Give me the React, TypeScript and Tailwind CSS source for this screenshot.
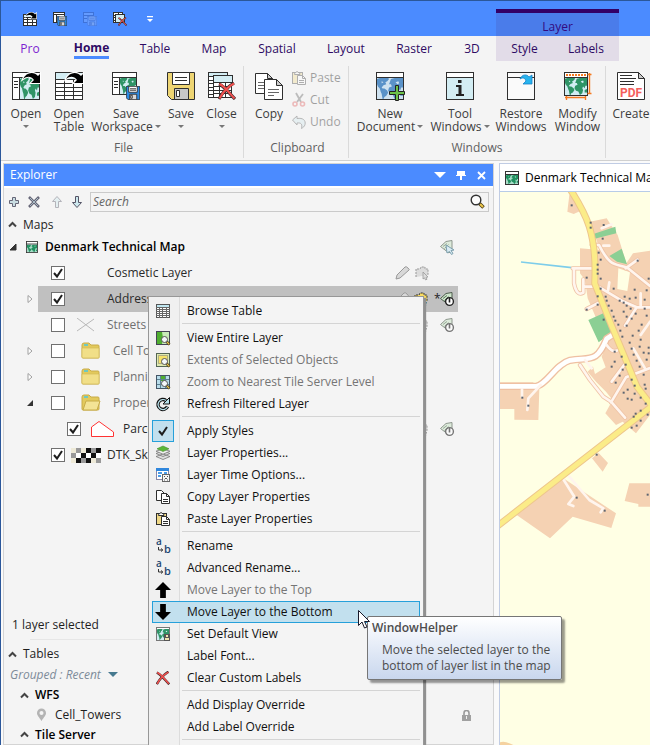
import React from "react";
import type { ReactNode } from "react";

const INK = "#2f2f2f";

/* ---------- icons ---------- */

function Land({ x = 0, y = 0, w = 28, h = 20, fill = "#2f9466", sea = "#d3edf3" }) {
  return (
    <svg x={x} y={y} width={w} height={h} viewBox="0 0 28 20" preserveAspectRatio="none">
      <rect width="28" height="20" fill={sea} />
      <path
        fill={fill}
        d="M0 1l3-1h9l1 1-2 2-2 1 1 2-3 1-2 2 1 1 2 0 3 2 1 2-2 3-2 1-1 2H6l-1-5-1-2-1-3-2-2-1-2zM15 1l4-1h9v9l-2 0-1 3-2-2-1 2 1 2-1 4-3 2-2-4-3-1-2-3 1-3 3-1-1-2-2 0zM25 14l3-1v4l-3 0z"
      />
      <path fill={sea} d="M20 4l3-1 1 2-2 1zM5 3l2 1-2 1z" />
    </svg>
  );
}

function Swoop({ x = 0, y = 0, s = 1 }) {
  return (
    <g transform={`translate(${x} ${y}) scale(${s})`}>
      <path d="M0 7C3 0 11-1 15 4l2-2v9H8l3-3C8 4 4 4 0 7z" fill="#fff" stroke="#fff" strokeWidth="2" />
      <path d="M0 7C3 0 11-1 15 4l2-2v9H8l3-3C8 4 4 4 0 7z" fill="#000" />
    </g>
  );
}

function Floppy({ x = 0, y = 0, w = 14, body = "#2b8ce6", shutter = "#d8d8d8", accent = "#2f2f2f" }) {
  const line = w > 20 ? 1 : 1.8;
  return (
    <svg x={x} y={y} width={w} height={w} viewBox="0 0 28 28">
      <path d="M.5.5h27v27H4.500l-4-4z" fill={body} stroke={accent} strokeWidth={line} />
      <path d="M5.500.5h17v12h-17z" fill="#fff" stroke={accent} strokeWidth={line} />
      <path d="M8 5.500h12M8 8.500h12" stroke={accent} strokeWidth={line} />
      <path d="M7.500 16.500h14v11h-14z" fill={shutter} stroke={accent} strokeWidth={line} />
      <path d="M9.500 18.500h3v6h-3z" fill="#fff" stroke={accent} strokeWidth={line} />
    </svg>
  );
}

function RedX({ x = 0, y = 0, w = 18 }) {
  return (
    <svg x={x} y={y} width={w} height={w} viewBox="0 0 18 18">
      <path d="M1 2c5 2 10 9 16 15M16 1C11 4 5 10 1 17" stroke="#3a2a2a" strokeWidth="3.200" fill="none" />
      <path d="M1.500 2c5 2 10 9 15 14.500M16 1.500C11 4 5 10 1.500 16.500" stroke="#f0504f" strokeWidth="2" fill="none" />
    </svg>
  );
}

function Grid({ x, y, w, h, cols, rows }: { x: number; y: number; w: number; h: number; cols: number; rows: number }) {
  let d = "";
  for (let i = 1; i < cols; i++) d += `M${x + Math.round((w * i) / cols)} ${y}v${h}`;
  for (let j = 1; j < rows; j++) d += `M${x} ${y + Math.round((h * j) / rows)}h${w}`;
  return (
    <>
      <rect x={x} y={y} width={w} height={h} fill="#fff" stroke={INK} />
      <path d={d} stroke={INK} fill="none" />
    </>
  );
}

function Big({ children }: { children: ReactNode }) {
  return (
    <svg width="30" height="30" viewBox="0 0 30 30" className="shrink-0" aria-hidden="true">
      {children}
    </svg>
  );
}
function Small({ children, size = 14 }: { children: ReactNode; size?: number }) {
  return (
    <svg width={size} height={size} viewBox="0 0 14 14" className="shrink-0 overflow-visible" aria-hidden="true">
      {children}
    </svg>
  );
}

const OpenIcon = () => (
  <Big>
    <rect x="1.500" y="1.500" width="27" height="27" fill="#fff" stroke={INK} />
    <Land x={9} y={7} w={19} h={21} />
    <path d="M1 6.500h28M8.500 6.500v22M3 10.500h4M3 13.500h4M3 16.500h4" stroke={INK} />
    <Swoop x={12} y={1} />
  </Big>
);
const OpenTableIcon = () => (
  <Big>
    <rect x="1.500" y="1.500" width="27" height="27" fill="#d3edf3" stroke={INK} />
    <Grid x={1.5} y={8.5} w={27} h={20} cols={3} rows={5} />
    <Swoop x={12} y={1} />
  </Big>
);
const SaveWorkspaceIcon = () => (
  <Big>
    <rect x="1.500" y="1.500" width="24" height="22" fill="#fff" stroke={INK} />
    <Land x={9} y={7} w={16} h={16} />
    <path d="M1 6.500h25M8.500 6.500v17M3 10.500h4M3 13.500h4M3 16.500h4" stroke={INK} />
    <Floppy x={15} y={15} w={14} />
  </Big>
);
const SaveIcon = () => (
  <Big>
    <Floppy x={1} y={1} w={28} body="#eed573" shutter="#c8c8c8" />
  </Big>
);
const CloseIcon = () => (
  <Big>
    <Grid x={1.5} y={5.5} w={15} h={21} cols={2} rows={6} />
    <rect x="1.500" y="1.500" width="19" height="4" fill="#d3edf3" stroke={INK} />
    <Grid x={6.5} y={11.5} w={18} h={15} cols={3} rows={4} />
    <rect x="6.500" y="4.500" width="19" height="7" fill="#d3edf3" stroke={INK} />
    <RedX x={11} y={11} w={18} />
  </Big>
);
const CopyIcon = () => (
  <Big>
    <path d="M1.500 2.500h12l5 5v15h-17z" fill="#fff" stroke={INK} />
    <path d="M13.500 2.500v5h5z" fill="#ccc" stroke={INK} />
    <path d="M4 11.500h6M4 14.500h6M4 17.500h6" stroke="#666" />
    <path d="M10.500 8.500h12l6 6v14h-18z" fill="#fff" stroke={INK} />
    <path d="M22.500 8.500v6h6z" fill="#ccc" stroke={INK} />
    <path d="M14 18.500h11M14 21.500h11M14 24.500h6" stroke="#666" />
  </Big>
);
const NewDocIcon = () => (
  <Big>
    <rect x="1.500" y="1.500" width="27" height="27" fill="#fff" stroke={INK} />
    <Land x={2} y={7} w={26} h={21} fill="#5a92c8" sea="#cfe2f0" />
    <path d="M1 6.500h28" stroke={INK} />
    <path d="M20.500 14.500h3v6h6v3h-6v6h-3v-6h-6v-3h6z" fill="#6cc24a" stroke="#222" />
  </Big>
);
const ToolWinIcon = () => (
  <Big>
    <rect x="1.500" y="1.500" width="27" height="27" fill="#d3edf3" stroke={INK} />
    <path d="M2 2h26v5H2z" fill="#fff" />
    <path d="M1 6.500h28" stroke={INK} />
    <path d="M11 14h5.500v9H19v2h-8v-2h2.500v-7H11zM13 9h3.500v3H13z" fill="#222" />
  </Big>
);
const RestoreIcon = () => (
  <Big>
    <rect x="1.500" y="1.500" width="27" height="27" fill="#fafafa" stroke={INK} />
    <path d="M1 6.500h28" stroke={INK} />
    <path d="M14 8c2-5 7-5 9-2l3-2v9h-9l3-3c-1-3-3-4-6-2z" fill="#27b4ee" stroke="#1580c8" strokeWidth="0.800" />
  </Big>
);
const ModifyIcon = () => (
  <Big>
    <rect x="1.500" y="1.500" width="23" height="23" fill="#fff" stroke={INK} />
    <Land x={2} y={7} w={22} h={17} />
    <path d="M1 6.500h24" stroke={INK} />
    <path d="M3 4h20" stroke="#f57a20" strokeWidth="2" strokeDasharray="2 1" />
    <path d="M26.500 2v21M2 26.500h21M24.500 3.500h4M24.500 22.500h4M3.500 25v4M22.500 25v4" stroke="#f57a20" fill="none" strokeWidth="1.400" />
  </Big>
);
const PdfIcon = () => (
  <Big>
    <path d="M1.500 1.500h21l6 6v21h-27z" fill="#fff" stroke={INK} />
    <path d="M22.500 1.500v6h6z" fill="#ccc" stroke={INK} />
    <path d="M4 4.500h12M4 7.500h16M4 10.500h14M4 13.500h14" stroke={INK} />
    <text x="15" y="26" textAnchor="middle" fontFamily="Roboto, sans-serif" fontWeight="700" fontSize="12" fill="#f4605c">PDF</text>
  </Big>
);

const MapMini = ({ size = 12 }) => (
  <Small size={size}>
    <rect x="0.500" y="0.500" width="13" height="13" fill="#fff" stroke="#333" />
    <Land x={1} y={4} w={12} h={9} fill="#219060" sea="#a8dcc8" />
    <path d="M0 3.500h14" stroke="#333" />
  </Small>
);
const Magnify = ({ x = 5, y = 5 }) => (
  <g transform={`translate(${x} ${y})`}>
    <path d="M5.500 5.500L8.500 8.500" stroke="#4a4020" strokeWidth="2.600" />
    <path d="M6 6l2.300 2.300" stroke="#f0c850" strokeWidth="1.200" />
    <circle cx="3.500" cy="3.500" r="3" fill="#f4f8fa" stroke="#555" />
  </g>
);
const TableIcon = () => (
  <Small>
    <rect x="0.500" y="0.500" width="13" height="13" fill="#fff" stroke="#555" />
    <path d="M1 1h12v2H1z" fill="#bfe6f0" />
    <path d="M0 3.500h14M0 5.500h14M0 7.500h14M0 9.500h14M0 11.500h14M3.500 3v11M6.500 3v11M10.500 3v11" stroke="#666" />
  </Small>
);
const ViewLayerIcon = () => (
  <Small>
    <rect x="0.500" y="0.500" width="13" height="13" fill="#c8ecb8" stroke="#445" />
    <path d="M1 1h5l1 6-1 6H1z" fill="#4fae30" />
    <Magnify />
  </Small>
);
const ExtentsIcon = () => (
  <Small>
    <rect x="0.500" y="0.500" width="13" height="13" fill="#dfe9b0" stroke="#565" />
    <rect x="2.500" y="2.500" width="9" height="8" fill="#f6e268" stroke="#777" strokeDasharray="1 1" />
    <Magnify />
  </Small>
);
const TileIcon = () => (
  <Small>
    <rect x="0.500" y="0.500" width="13" height="13" fill="#b8dcea" stroke="#456" />
    <path d="M5 1h5v5H5z" fill="#4fae30" />
    <path d="M4.500 1v12M9.500 1v12M1 4.500h12M1 9.500h12" stroke="#5b8192" />
    <Magnify />
  </Small>
);
const RefreshIcon = () => (
  <Small>
    <path d="M11.500 9.500A5 5 0 1 1 10 3.500" fill="none" stroke="#111" strokeWidth="3.400" />
    <path d="M13.500.5v6.500H7z" fill="#b9e2ec" stroke="#111" />
    <path d="M11.500 9.800A5 5 0 1 1 10 3.500" fill="none" stroke="#b9e2ec" strokeWidth="1.200" />
  </Small>
);
const CheckGlyph = () => (
  <Small>
    <path d="M3 7l3 3.500L11 3" fill="none" stroke="#1e1e1e" strokeWidth="2" />
  </Small>
);
const LayersIcon = () => (
  <Small>
    <path d="M0 10.500l7-2.500 7 2.500-7 3zM0 7.500L7 5l7 2.500-7 3z" fill="#ddd" stroke="#777" strokeWidth="0.800" />
    <path d="M0 5.200L7 3l7 2.200-7 3z" fill="#eee" stroke="#777" strokeWidth="0.800" />
    <path d="M1 2.800L7 0l6 2.800-6 2.700z" fill="#5cb838" stroke="#498a30" strokeWidth="0.600" />
  </Small>
);
const TimeIcon = () => (
  <Small>
    <rect x="0.500" y="0.500" width="12" height="11" fill="#fff" stroke="#88a" />
    <path d="M0 0h13v3H0z" fill="#2f86dc" />
    <path d="M2 5h4M2 8h3M8 5h3" stroke="#4b9be6" strokeWidth="2" />
    <rect x="6.500" y="6.500" width="7" height="7" fill="#f6f6f6" stroke="#666" />
    <path d="M8 8.500h1M11 8.500h1M9 10.500h2M8 12h1M11 12h1" stroke="#555" />
  </Small>
);
const CopySmall = () => (
  <Small>
    <path d="M0.500 0.500h5l3 3v7h-8z" fill="#fff" stroke={INK} />
    <path d="M5.500 3.500h5l3 3v7h-8z" fill="#fff" stroke={INK} />
    <path d="M10.500 3.500v3h3M7 9.500h5M7 11.500h5" stroke={INK} fill="none" />
  </Small>
);
const PasteSmall = () => (
  <Small>
    <rect x="0.500" y="1.500" width="10" height="11" fill="#efd886" stroke={INK} />
    <path d="M2.500 2.500L5 0.500l3 2v1h-5.500z" fill="#fff" stroke={INK} />
    <path d="M5.500 4.500h5l3 3v6h-8z" fill="#fff" stroke={INK} />
    <path d="M10.500 4.500v3h3M7 9.500h5M7 11.500h5" stroke={INK} fill="none" />
  </Small>
);
const RenameIcon = () => (
  <Small>
    <text x="0" y="6" fontFamily="'Open Sans', sans-serif" fontWeight="600" fontSize="10" fill="#1d4672">a</text>
    <text x="8" y="14" fontFamily="'Open Sans', sans-serif" fontWeight="600" fontSize="11" fill="#1d4672">b</text>
    <path d="M2.500 8v3h4M5 9.500L6.800 11 5 12.500" fill="none" stroke="#333" />
  </Small>
);
const UpIcon = () => (
  <Small size={16}>
    <path d="M7 0l7 7H9.500v7h-5V7H0z" fill="#000" />
  </Small>
);
const DownIcon = () => (
  <Small size={16}>
    <path d="M7 14l7-7H9.500V0h-5v7H0z" fill="#000" />
  </Small>
);
const DefaultViewIcon = () => (
  <Small>
    <rect x="0.500" y="0.500" width="13" height="13" fill="#fff" stroke="#777" />
    <Land x={1} y={2} w={12} h={11} />
    <path d="M8 7h6v7H8z" fill="#555" />
    <path d="M10 8h2v2h-2zM9 11h4v2H9z" fill="#f0e6b0" />
  </Small>
);
const ClearIcon = () => (
  <Small>
    <RedX w={14} />
  </Small>
);
const ScissorsIcon = () => (
  <Small>
    <path d="M4 0l5 9M11 1L5 9" stroke="#555" strokeWidth="1.800" />
    <circle cx="3" cy="11" r="2" fill="none" stroke="#e05050" strokeWidth="1.600" />
    <circle cx="10.500" cy="11" r="2" fill="none" stroke="#e05050" strokeWidth="1.600" />
  </Small>
);
const UndoIcon = () => (
  <Small>
    <path d="M0.500 5L5 1v2.500c6-1 9 2 8 6-.5 2-2 3-3.500 4 1-4 0-6-4.500-5.500v2z" fill="#cfe6ee" stroke="#444" />
  </Small>
);
const Folder = ({ open = false }) => (
  <svg width="20" height="18" viewBox="0 0 20 18" className="shrink-0" aria-hidden="true">
    <path d="M1 3q0-2 2-2h5l2 2h7q1 0 1 1v11q0 1-1 1H2q-1 0-1-1z" fill="#e2c95c" stroke="#c8ac48" />
    <path d="M3 2h4v2H3z" fill="#6fc8c0" />
    {open ? (
      <path d="M5 7h14l-3 9H2z" fill="#f3e395" stroke="#c8ac48" />
    ) : (
      <path d="M1 6h17v10H2q-1 0-1-1z" fill="#f1df88" stroke="#d3ba58" strokeWidth="0.700" />
    )}
  </svg>
);
const Pencil = () => (
  <Small>
    <path d="M1 13l1-4 8-8q1-1 3 1t1 2l-9 8z" fill="#d8d8d8" stroke="#999" />
  </Small>
);
const SelectIcon = ({ active = false }) => (
  <Small>
    <path d="M1 11V3h4l1-2h4v2h3v6" fill={active ? "#f7da62" : "#dcdcdc"} stroke={active ? "#333" : "#999"} strokeDasharray="2 1" />
    <path d="M8 6l5 5-2 .3 1 2-1.500.6-1-2L8 13z" fill={active ? "#bfe2ee" : "#ddd"} stroke={active ? "#478" : "#999"} strokeWidth="0.800" />
  </Small>
);
const TagIcon = ({ kind = "power", strong = false }) => (
  <Small>
    <g opacity={strong ? 1 : 0.6}>
      <path d="M0.500 6.500L6 1.500l6-1V10l-3 3z" fill="#cfe6cc" stroke="#4b5b4b" />
      <path d="M3 6.500l4-3M4.500 8.500l4-4" stroke="#5d7a5d" />
      {kind === "power" ? (
        <>
          <circle cx="9.500" cy="9.500" r="3.900" fill="#fff" stroke="#222" strokeWidth="1.400" />
          <path d="M9.500 5.500v5" stroke="#222" strokeWidth="1.600" />
        </>
      ) : (
        <path d="M6 5l8 5-3 .5 2 3-1.500 1-2-3L7 13z" fill="#cce8f4" stroke="#2d6880" />
      )}
    </g>
  </Small>
);

/* ---------- ribbon ---------- */

const caret = <span className="inline-block border-x-[3px] border-t-[3px] border-x-transparent border-t-[#777]" />;

function BigButton({ icon, lines, drop, className }: { icon: ReactNode; lines: string[]; drop?: boolean; className: string }) {
  const single = lines.length === 1;
  return (
    <button className={`flex shrink-0 flex-col items-center text-[12px] leading-[13px] text-[#3c3c3c] ${className}`}>
      {icon}
      <span className="mt-[6px] whitespace-nowrap">{lines[0]}</span>
      {!single && (
        <span className="flex items-center gap-[2px] whitespace-nowrap">
          {lines[1]}
          {drop && caret}
        </span>
      )}
      {single && drop && <span className="flex h-[13px] items-center">{caret}</span>}
    </button>
  );
}

function Group({ label, children, className = "" }: { label: string; children: ReactNode; className?: string }) {
  return (
    <section className={`flex h-[92px] shrink-0 flex-col border-r border-[#dadada] ${className}`}>
      <div className="flex flex-1 pt-[5px]">{children}</div>
      <div className="pb-[2px] text-center text-[12px] leading-[16px] text-[#606060]">{label}</div>
    </section>
  );
}

const tabs: [string, string][] = [
  ["Table", "w-[62px]"],
  ["Map", "w-[56px]"],
  ["Spatial", "w-[70px]"],
  ["Layout", "w-[68px]"],
  ["Raster", "w-[68px]"],
  ["3D", "w-[48px]"],
];

function TitleAndTabs() {
  return (
    <header className="relative shrink-0">
      <div className="flex h-[36px] items-center gap-[16px] border-t border-[#2b579a] bg-[#4b8bff] pl-[22px]">
        <button aria-label="Open table">
          <Small>
            <Grid x={0.5} y={4.5} w={13} h={9} cols={3} rows={3} />
            <rect x="0.500" y="2.500" width="13" height="3" fill="#d3edf3" stroke={INK} />
            <Swoop x={3} y={0} s={0.6} />
          </Small>
        </button>
        <button aria-label="Save tables">
          <Small>
            <rect x="0.500" y="0.500" width="11" height="10" fill="#fff" stroke={INK} />
            <path d="M0 2.500h12M3.500 2v9" stroke={INK} />
            <Floppy x={4} y={4} w={10} />
          </Small>
        </button>
        <button aria-label="Save table as" disabled className="opacity-30">
          <Small>
            <rect x="0.500" y="0.500" width="10" height="10" fill="#9fc0ff" stroke="#223a80" />
            <path d="M0 3.500h11M0 6.500h11M5.500 3v8" stroke="#223a80" />
            <Floppy x={4} y={4} w={10} body="#9fc0ff" accent="#223a80" />
          </Small>
        </button>
        <button aria-label="Close all">
          <Small>
            <Grid x={0.5} y={0.5} w={9} h={10} cols={2} rows={4} />
            <rect x="2.500" y="2.500" width="9" height="8" fill="#d3edf3" stroke={INK} />
            <RedX x={5} y={5} w={9} />
          </Small>
        </button>
        <button aria-label="Customize quick access">
          <Small>
            <path d="M4 4h6v1.200H4zM4 7h6l-3 3z" fill="#fff" />
          </Small>
        </button>
      </div>
      <nav className="flex h-[26px] items-stretch bg-[#f4f4f4] text-[12px] leading-[24px] text-[#2e0a63]">
        <button className="w-[58px] shrink-0 text-[#7c1fd0]">Pro</button>
        <button className="flex w-[65px] shrink-0 justify-center font-bold">
          <span className="h-[23px] border-b-[3px] border-[#4b8bff]">Home</span>
        </button>
        {tabs.map(([t, w]) => (
          <button key={t} className={`shrink-0 ${w}`}>
            {t}
          </button>
        ))}
        <div className="mb-px flex shrink-0 bg-[#e2dce8]">
          <button className="w-[57px]">Style</button>
          <button className="w-[66px]">Labels</button>
        </div>
      </nav>
      <div className="absolute top-[9px] left-[495px] h-[27px] w-[123px] border-t-4 border-[#330066] bg-[#4a7cea] text-center text-[12px] leading-[27px] text-[#330a80]">
        Layer
      </div>
    </header>
  );
}

function Ribbon() {
  const small = "flex h-[22px] items-center gap-[4px] text-[12px]";
  return (
    <div className="flex h-[98px] shrink-0 items-start overflow-hidden bg-[#f4f4f4] pt-[4px] pl-[3px]">
      <Group label="File">
        <BigButton className="w-[44px]" icon={<OpenIcon />} lines={["Open"]} drop />
        <BigButton className="w-[42px]" icon={<OpenTableIcon />} lines={["Open", "Table"]} />
        <BigButton className="w-[72px]" icon={<SaveWorkspaceIcon />} lines={["Save", "Workspace"]} drop />
        <BigButton className="w-[38px]" icon={<SaveIcon />} lines={["Save"]} drop />
        <BigButton className="w-[43px]" icon={<CloseIcon />} lines={["Close"]} drop />
      </Group>
      <Group label="Clipboard" className="w-[105px] pl-[3px]">
        <BigButton className="w-[44px]" icon={<CopyIcon />} lines={["Copy"]} />
        <div className="-mt-[4px] ml-px flex flex-col opacity-35">
          <button disabled className={small}><PasteSmall />Paste</button>
          <button disabled className={small}><ScissorsIcon />Cut</button>
          <button disabled className={small}><UndoIcon />Undo</button>
        </div>
      </Group>
      <Group label="Windows">
        <BigButton className="w-[82px]" icon={<NewDocIcon />} lines={["New", "Document"]} drop />
        <BigButton className="w-[58px]" icon={<ToolWinIcon />} lines={["Tool", "Windows"]} drop />
        <BigButton className="ml-[3px] w-[58px]" icon={<RestoreIcon />} lines={["Restore", "Windows"]} />
        <BigButton className="w-[55px]" icon={<ModifyIcon />} lines={["Modify", "Window"]} />
      </Group>
      <div className="flex pt-[5px]">
        <BigButton className="w-[50px]" icon={<PdfIcon />} lines={["Create"]} />
      </div>
    </div>
  );
}

/* ---------- explorer ---------- */

function Tick({ label, checked }: { label: string; checked?: boolean }) {
  return (
    <span className="grid shrink-0 place-items-center">
      <input
        type="checkbox"
        aria-label={label}
        defaultChecked={checked}
        className="peer size-[14px] appearance-none border border-[#707070] bg-white [grid-area:1/1]"
      />
      <span className="pointer-events-none invisible [grid-area:1/1] peer-checked:visible">
        <CheckGlyph />
      </span>
    </span>
  );
}

function Row(p: {
  label: string;
  checked?: boolean;
  expander?: "closed" | "open";
  icon?: ReactNode;
  iconWidth?: string;
  nested?: boolean;
  dim?: boolean;
  selected?: boolean;
  trail?: ReactNode;
}) {
  return (
    <li className="flex h-[26px] items-center">
      <span className="flex w-[34px] shrink-0 justify-end pr-[4px]">
        {p.expander && (
          <button aria-label={`Toggle ${p.label}`} className="flex">
            <svg width="8" height="10" viewBox="0 0 8 10" aria-hidden="true">
              {p.expander === "open" ? (
                <path d="M7 2v6H1z" fill="#333" />
              ) : (
                <path d="M2 1.500v7L6 5z" fill="#fff" stroke="#a0a0a0" />
              )}
            </svg>
          </button>
        )}
      </span>
      <span className={`mr-[35px] flex h-full flex-1 items-center pr-[4px] ${p.nested ? "pl-[29px]" : "pl-[13px]"} ${p.selected ? "bg-[#c0c0c0]" : ""}`}>
        <Tick label={p.label} checked={p.checked} />
        <span className={`flex shrink-0 items-center justify-center ${p.iconWidth ?? "w-[42px]"}`}>{p.icon}</span>
        <span className={`whitespace-nowrap ${p.dim ? "text-[#707070]" : "text-[#2a2a2a]"}`}>{p.label}</span>
        <span className="ml-auto flex items-center gap-[6px]">{p.trail}</span>
      </span>
    </li>
  );
}

const Chevron = () => (
  <svg width="9" height="7" viewBox="0 0 9 7" className="shrink-0" aria-hidden="true">
    <path d="M1 5.500L4.500 2 8 5.500" fill="none" stroke="#444" strokeWidth="2" />
  </svg>
);

function Explorer() {
  const toolBtn = "flex size-[14px] shrink-0";
  const layerTools = (
    <>
      <Pencil />
      <SelectIcon />
      <span className="w-0" />
      <TagIcon />
    </>
  );
  return (
    <aside className="flex w-[491px] shrink-0 flex-col border border-[#d4d4d4] bg-[#f4f4f4] text-[12px] text-[#1e1e1e]">
      <div className="flex h-[22px] shrink-0 items-center bg-[#4b8bff] pr-[7px] pl-[6px] text-white">
        <h2>Explorer</h2>
        <div className="ml-auto flex items-center gap-[9px]">
          <button aria-label="Options" className="border-x-[6px] border-t-[6px] border-x-transparent border-t-white" />
          <button aria-label="Pin">
            <svg width="11" height="11" viewBox="0 0 11 11"><path d="M2 1h8v4h1v1H1V5h1zM5 6h2v4H5z" fill="#fff" /></svg>
          </button>
          <button aria-label="Close panel" className="ml-[2px]">
            <svg width="9" height="9" viewBox="0 0 9 9"><path d="M1 1l7 7M8 1L1 8" stroke="#fff" strokeWidth="1.800" /></svg>
          </button>
        </div>
      </div>
      <div className="flex h-[29px] shrink-0 items-center border-t-2 border-white pr-[4px] pl-[3px]">
        <button aria-label="Add" className={toolBtn}>
          <Small><path d="M5.500 2.500h3v3h3v3h-3v3h-3v-3h-3v-3h3z" fill="#c9dde2" stroke="#667" /></Small>
        </button>
        <button aria-label="Remove" className={`${toolBtn} ml-[6px]`}>
          <Small><path d="M2 2l10 10M12 2L2 12" stroke="#667" strokeWidth="2.600" /><path d="M3 3l8 8M11 3l-8 8" stroke="#b9d0d8" strokeWidth="0.800" /></Small>
        </button>
        <button aria-label="Move up" disabled className={`${toolBtn} ml-[9px] opacity-40`}>
          <Small><path d="M7 1.500l4.500 5h-3v6h-3v-6h-3z" fill="#cde8ee" stroke="#556" /></Small>
        </button>
        <button aria-label="Move down" className={`${toolBtn} ml-[6px]`}>
          <Small><path d="M7 12.500l4.500-5h-3v-6h-3v6h-3z" fill="#cde8ee" stroke="#556" /></Small>
        </button>
        <label className="ml-[6px] flex h-[20px] min-w-0 flex-1 items-center border border-[#cacaca] pr-[3px]">
          <input type="text" aria-label="Search" placeholder="Search" className="min-w-0 flex-1 bg-transparent pl-[2px] italic outline-none placeholder:text-[#666]" />
          <svg width="15" height="15" viewBox="0 0 15 15" aria-hidden="true">
            <path d="M9.500 9.500l4 4" stroke="#4a3c14" strokeWidth="3.600" />
            <path d="M10 10l3 3" stroke="#efc84a" strokeWidth="2" />
            <circle cx="6" cy="6" r="4.800" fill="#fdfdfd" stroke="#333" strokeWidth="1.400" />
          </svg>
        </label>
      </div>
      <div className="flex h-[19px] shrink-0 items-center gap-[6px] pl-[4px]">
        <Chevron />
        Maps
      </div>
      <div className="flex h-[26px] shrink-0 items-center pl-[5px]">
        <svg width="8" height="8" viewBox="0 0 8 8" aria-hidden="true"><path d="M7 1v6H1z" fill="#333" stroke="#333" /></svg>
        <span className="ml-[9px] flex"><MapMini /></span>
        <span className="ml-[7px] font-semibold text-black">Denmark Technical Map</span>
        <span className="mr-[39px] ml-auto"><TagIcon kind="arrow" /></span>
      </div>
      <ul className="min-h-0 flex-1 overflow-hidden">
        <Row label="Cosmetic Layer" checked trail={<><Pencil /><SelectIcon /><span className="w-[19px]" /></>} />
        <Row
          label="Addresses"
          checked
          selected
          expander="closed"
          trail={<><Pencil /><SelectIcon active /><span className="w-[5px]">*</span><span className="-ml-[5px] flex"><TagIcon strong /></span></>}
        />
        <Row
          label="Streets"
          dim
          icon={<svg width="20" height="14" viewBox="0 0 20 14" aria-hidden="true"><path d="M1 0l17 13M18 1L1 13" stroke="#b8b8b8" fill="none" /></svg>}
          trail={layerTools}
        />
        <Row label="Cell Towers" dim expander="closed" icon={<Folder />} iconWidth="w-[48px] pl-[4px]" />
        <Row label="Planning" dim expander="closed" icon={<Folder />} iconWidth="w-[48px] pl-[4px]" />
        <Row label="Property" dim expander="open" icon={<Folder open />} iconWidth="w-[48px] pl-[4px]" />
        <Row
          label="Parcels"
          checked
          nested
          icon={<svg width="23" height="18" viewBox="0 0 23 18" aria-hidden="true"><path d="M0.500 16.500V7L8 1.500 22.500 12v4.500z" stroke="#f33" fill="#fff" /></svg>}
          trail={layerTools}
        />
        <Row
          label="DTK_Skaermkort"
          checked
          icon={
            <svg width="30" height="15" viewBox="0 0 6 3" shapeRendering="crispEdges" aria-hidden="true">
              <path d="M0 0h6v3H0z" fill="#fff" />
              <path d="M0 0h1v1H0zM2 0h1v1H2zM4 2h1v1H4zM0 2h1v1H0z" fill="#eeead8" />
              <path d="M1 0h1v1H1zM4 0h1v1H4zM0 1h1v1H0zM2 2h1v1H2zM5 2h1v1H5z" fill="#999" />
              <path d="M3 0h1v1H3zM5 0h1v1H5zM2 1h1v1H2zM4 1h1v1H4zM1 2h1v1H1zM3 2h1v1H3z" fill="#111" />
            </svg>
          }
        />
      </ul>
      <div className="h-[24px] shrink-0 pl-[8px] leading-[20px]">1 layer selected</div>
      <div className="mr-[30px] ml-[26px] h-[5px] shrink-0 border-t border-[#e6e6e6]" />
      <div className="flex h-[20px] shrink-0 items-center gap-[6px] pl-[4px]">
        <Chevron />
        Tables
      </div>
      <button className="flex h-[21px] shrink-0 items-center gap-[7px] pl-[6px] text-[#7d8b99] italic">
        Grouped : Recent
        <span className="border-x-[5px] border-t-[5px] border-x-transparent border-t-[#46798f]" />
      </button>
      <div className="flex h-[20px] shrink-0 items-center gap-[6px] pl-[16px] font-semibold text-black">
        <Chevron />
        WFS
      </div>
      <div className="flex h-[20px] shrink-0 items-center pl-[32px]">
        <svg width="11" height="14" viewBox="0 0 11 14" aria-hidden="true">
          <path d="M5.500 13C3 9 1 7.500 1 5a4.500 4.500 0 0 1 9 0c0 2.500-2 4-4.500 8z" fill="#b4b4b4" />
          <circle cx="5.500" cy="5" r="2" fill="#f4f4f4" />
        </svg>
        <span className="ml-[8px]">Cell_Towers</span>
        <svg width="11" height="11" viewBox="0 0 11 11" className="mr-[21px] ml-auto" aria-hidden="true">
          <path d="M1 5h9v6H1z" fill="#a0a0a0" />
          <path d="M3 5V3a2.500 2.500 0 0 1 5 0v2" fill="none" stroke="#999" strokeWidth="1.600" />
          <path d="M5 6h1v3H5z" fill="#eee" />
        </svg>
      </div>
      <div className="flex h-[19px] shrink-0 items-center gap-[6px] pl-[16px] font-semibold text-black">
        <Chevron />
        Tile Server
      </div>
    </aside>
  );
}

/* ---------- map ---------- */

const houses = [
  [245, 61], [302, 113], [302, 128], [341, 120], [338, 161], [326, 203], [332, 224], [323, 239], [323, 254], [323, 266], [332, 281], [290, 278],
  [443, 227], [476, 281], [470, 316], [434, 314], [371, 311], [332, 311], [323, 334], [347, 335], [350, 347], [323, 359], [290, 374], [356, 362],
  [341, 404], [365, 377], [371, 395], [376, 407], [385, 419], [391, 437], [397, 455], [404, 335], [419, 341], [389, 347], [401, 353], [410, 362],
  [422, 371], [437, 338], [464, 344], [464, 371], [401, 380], [437, 386], [410, 395], [425, 401], [410, 422], [470, 392], [455, 419], [446, 437],
  [428, 452], [452, 464], [419, 473], [449, 485], [425, 491], [476, 488], [431, 509], [461, 503], [476, 505], [440, 527], [470, 524], [374, 500],
  [395, 515], [374, 530], [407, 539], [365, 545], [398, 554], [389, 572], [449, 545], [461, 569], [425, 584], [377, 593], [464, 599],
  [434, 602], [467, 611], [413, 614], [401, 623], [434, 626], [452, 638], [413, 641], [425, 644], [467, 656], [452, 677], [437, 686], [473, 689],
  [431, 695], [452, 707], [440, 722], [425, 728], [97, 638], [115, 662], [320, 809], [260, 938], [344, 977], [473, 929],
];

function MapView() {
  return (
    <svg
      role="img"
      aria-label="Denmark Technical Map"
      viewBox="30 21 450 1659"
      preserveAspectRatio="xMinYMin slice"
      className="block h-full w-full"
    >
      <rect x="30" y="21" width="900" height="1659" fill="#ffffe4" />
      <g fill="#f5d2b3">
        <path d="M238 30l25 6 8 42-20 9-19-7z" />
        <path d="M300 110l50-10 18 28 15 22 26 85 20-30 51-8V690l-42 55-40-35-20 10-32-35 22-40-20-25-30-30-25-30 40-40 20-50-30-60-30-70-8-55-15-20v-75l60 5z" />
        <path d="M30 612h118l-3 93-72-1v-32H30zM30 592h100v12H30zM306 820l20-16 28 30-16 26zM80 990l140-110 90 60 68 45-14 44-116-34-68 65zM418 895h62v70h-35v-8l-41-9z" />
      </g>
      <path d="M385 250l35 12-8 56-30-6zM305 530l30-15 12 32-32 20z" fill="#ffffe4" />
      <path d="M310 147l66-22 3 20-65 16zM358 213l37-22 16 47-30-8zM295 405l45-20 28 55-42 32z" fill="#8bcf94" />
      <path d="M93 231l152 17" stroke="#7dcdea" strokeWidth="5" fill="none" />
      <g fill="none" strokeLinejoin="round" strokeLinecap="round">
        <path d="M305 180h22c35 70 50 55 85 68l68 55M248 250h60M252 250v45q8 40 28 28v-40M285 305h30M320 302l75 45 45 20h40M440 367l-35 55M290 372l38-20M407 250l36-26M350 480q20 30 40 10M270 540l30 45 40 50 23 15 42 48M363 652l45-75 72-28M365 590l45-60" stroke="#efc3a6" strokeWidth="13" />
        <path d="M30 604h110c35-10 55-65 100-78 60-10 80 10 110-65l22-14" stroke="#efc0a2" strokeWidth="22" />
        <path d="M30 604h110c35-10 55-65 100-78 60-10 80 10 110-65l22-14" stroke="#fff" strokeWidth="14" />
        <path d="M305 180h22c35 70 50 55 85 68l68 55M248 250h60M252 250v45q8 40 28 28v-40M285 305h30M320 302l75 45 45 20h40M440 367l-35 55M358 292l-4 25M290 372l38-20M407 250l36-26M350 480q20 30 40 10M340 182h18M270 540l30 45 40 50 23 15 42 48M363 652l45-75 72-28M365 590l45-60M430 490l35 60M452 450l28-40M452 325v42M335 130l30-12M152 600l-37 40-3 35M96 612v24M285 525l20 25M218 880l35 55-18 22 15 6M238 875l60 70 42 25-8 12" stroke="#fff5ee" strokeWidth="8" />
        <path d="M242 15c45 70 80 130 72 280l52 130 75 180 50 65M490 660L20 1025" stroke="#eec68c" strokeWidth="21" />
        <path d="M242 15c45 70 80 130 72 280l52 130 75 180 50 65M490 660L20 1025" stroke="#fbec88" strokeWidth="15" />
      </g>
      <g fill="#5d6570">
        {houses.map(([x, y], i) => (
          <rect key={i} x={x - 3} y={y - 3} width="6" height="6" />
        ))}
      </g>
      <path d="M30 1672q15-5 40 8H30z" fill="#f5d2a0" />
    </svg>
  );
}

function Document() {
  return (
    <main className="ml-[5px] flex min-w-0 flex-1 flex-col border-t border-l border-[#c0cce4] bg-white">
      <div className="flex h-[28px] shrink-0 items-center gap-[6px] overflow-hidden border-b border-[#b8cce8] pl-[5px] text-[12px] whitespace-nowrap text-black">
        <span className="shrink-0"><MapMini size={14} /></span>
        Denmark Technical Map
      </div>
      <div className="min-h-0 flex-1 overflow-hidden">
        <MapView />
      </div>
    </main>
  );
}

/* ---------- context menu ---------- */

type Item = { label: string; icon?: ReactNode; disabled?: boolean; checked?: boolean; hot?: boolean };
const sections: Item[][] = [
  [{ label: "Browse Table", icon: <TableIcon /> }],
  [
    { label: "View Entire Layer", icon: <ViewLayerIcon /> },
    { label: "Extents of Selected Objects", icon: <ExtentsIcon />, disabled: true },
    { label: "Zoom to Nearest Tile Server Level", icon: <TileIcon />, disabled: true },
    { label: "Refresh Filtered Layer", icon: <RefreshIcon /> },
  ],
  [
    { label: "Apply Styles", icon: <CheckGlyph />, checked: true },
    { label: "Layer Properties...", icon: <LayersIcon /> },
    { label: "Layer Time Options...", icon: <TimeIcon /> },
    { label: "Copy Layer Properties", icon: <CopySmall /> },
    { label: "Paste Layer Properties", icon: <PasteSmall /> },
  ],
  [
    { label: "Rename", icon: <RenameIcon /> },
    { label: "Advanced Rename...", icon: <RenameIcon /> },
    { label: "Move Layer to the Top", icon: <UpIcon />, disabled: true },
    { label: "Move Layer to the Bottom", icon: <DownIcon />, hot: true },
    { label: "Set Default View", icon: <DefaultViewIcon /> },
    { label: "Label Font..." },
    { label: "Clear Custom Labels", icon: <ClearIcon /> },
  ],
  [{ label: "Add Display Override" }, { label: "Add Label Override" }],
];

function ContextMenu() {
  return (
    <div
      role="menu"
      className="absolute top-[296px] left-[148px] w-[276px] border border-[#979797] bg-[#f4f4f4] bg-[linear-gradient(90deg,#f0f0f0_30px,#dcdcdc_30px,#dcdcdc_31px,#f4f4f4_31px)] p-[3px] shadow-[2px_2px_1px_#909090]"
    >
      {sections.map((s, i) => (
        <div key={i}>
          {s.map((it) => (
            <button
              key={it.label}
              role="menuitem"
              disabled={it.disabled}
              className={`flex h-[22px] w-full items-center text-left text-[12px] ${it.disabled ? "text-[#757575]" : "text-[#101010]"} ${it.hot ? "bg-[#c2e0ee] outline outline-1 -outline-offset-1 outline-[#26a0da]" : ""}`}
            >
              <span
                className={`flex size-[22px] shrink-0 items-center justify-center ${it.checked ? "border border-[#26a0da] bg-[#c2e0ee]" : ""}`}
              >
                {it.icon}
              </span>
              <span className="pl-[13px] whitespace-nowrap">{it.label}</span>
            </button>
          ))}
          <div className="flex h-[5px] pt-px pl-[30px]">
            <div className="h-px flex-1 bg-[#d4d4d4]" />
          </div>
        </div>
      ))}
    </div>
  );
}

export default function App() {
  return (
    <div className="relative flex h-screen flex-col overflow-hidden border-l border-[#2b579a] bg-[#fafafa] font-['Open_Sans','Noto_Sans',sans-serif]">
      <TitleAndTabs />
      <Ribbon />
      <div className="flex min-h-0 flex-1 border-t border-[#d0d0d0] pt-[2px] pl-[2px]">
        <Explorer />
        <Document />
      </div>
      <div className="absolute inset-y-0 -left-px w-0">
        <ContextMenu />
        <div
          role="tooltip"
          className="absolute top-[616px] left-[367px] h-[64px] w-[195px] rounded-[2px] border border-[#767676] bg-linear-to-b from-white to-[#c9d7ee] pt-[3px] pl-[4px] text-[12px] leading-[16px] text-[#4c4c4c] shadow-[3px_3px_2px_#00000066]"
        >
          <div className="font-semibold">WindowHelper</div>
          <div className="mt-[6px] pl-[10px] whitespace-nowrap">
            Move the selected layer to the
            <br />
            bottom of layer list in the map
          </div>
        </div>
        <svg width="12" height="19" viewBox="0 0 12 19" className="absolute top-[610px] left-[358px]" aria-hidden="true">
          <path d="M0.500 0.500v15l3.500-3.500 2.500 6 2.500-1-2.500-5.500h5z" fill="#fff" stroke="#1a1a2a" />
        </svg>
      </div>
    </div>
  );
}
